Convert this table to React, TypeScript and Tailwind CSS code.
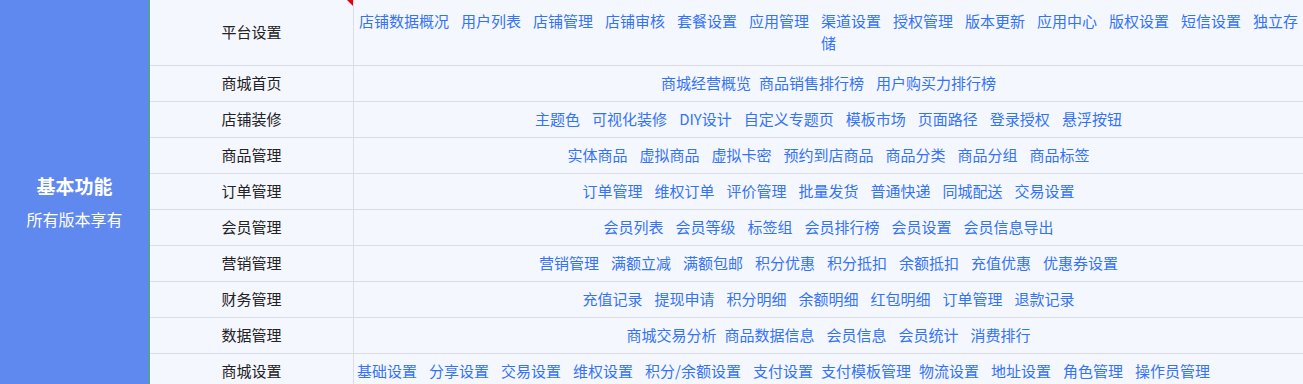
const rows: { name: string; items: string[]; tight?: string[]; left?: boolean }[] = [
  {
    name: '平台设置',
    items: ['店铺数据概况', '用户列表', '店铺管理', '店铺审核', '套餐设置', '应用管理', '渠道设置', '授权管理', '版本更新', '应用中心', '版权设置', '短信设置', '独立存储'],
  },
  { name: '商城首页', items: ['商城经营概览', '商品销售排行榜', '用户购买力排行榜'], tight: ['商品销售排行榜'] },
  { name: '店铺装修', items: ['主题色', '可视化装修', 'DIY设计', '自定义专题页', '模板市场', '页面路径', '登录授权', '悬浮按钮'] },
  { name: '商品管理', items: ['实体商品', '虚拟商品', '虚拟卡密', '预约到店商品', '商品分类', '商品分组', '商品标签'] },
  { name: '订单管理', items: ['订单管理', '维权订单', '评价管理', '批量发货', '普通快递', '同城配送', '交易设置'] },
  { name: '会员管理', items: ['会员列表', '会员等级', '标签组', '会员排行榜', '会员设置', '会员信息导出'] },
  { name: '营销管理', items: ['营销管理', '满额立减', '满额包邮', '积分优惠', '积分抵扣', '余额抵扣', '充值优惠', '优惠券设置'] },
  { name: '财务管理', items: ['充值记录', '提现申请', '积分明细', '余额明细', '红包明细', '订单管理', '退款记录'] },
  { name: '数据管理', items: ['商城交易分析', '商品数据信息', '会员信息', '会员统计', '消费排行'], tight: ['商品数据信息'] },
  {
    name: '商城设置',
    items: ['基础设置', '分享设置', '交易设置', '维权设置', '积分/余额设置', '支付设置', '支付模板管理', '物流设置', '地址设置', '角色管理', '操作员管理'],
    tight: ['支付模板管理', '物流设置'],
    left: true,
  },
];

export default function App() {
  return (
    <div className="flex w-[1303px] min-h-[384px] bg-[#f5f7ff] font-['Noto_Sans_CJK_SC',sans-serif]">
      {/* version column */}
      <div className="w-[150px] shrink-0 bg-[#6089f0] border-r border-[#4caf50] flex flex-col items-center pt-[174px] text-white">
        <div className="text-[19px] leading-[24px] font-bold">基本功能</div>
        <div className="mt-[10px] text-[16px] leading-[22px]">所有版本享有</div>
      </div>

      {/* feature rows */}
      <div className="flex-1">
        {rows.map((row, i) => (
          <div
            key={row.name}
            className={`flex border-b border-[#dadde5] ${i === 0 ? 'h-[66px]' : 'h-[36px]'}`}
          >
            <div className="relative w-[204px] shrink-0 border-r border-[#dadde5] flex items-center justify-center pb-px text-[15px] text-[#222]">
              {row.name}
              {i === 0 && (
                <span className="absolute top-0 right-0 w-0 h-0 border-t-[6px] border-l-[6px] border-t-[#e60012] border-l-transparent" />
              )}
            </div>
            <div
              className={`flex-1 flex items-center px-[3px] pb-px text-[15px] leading-[22px] text-[#3473f6] ${
                row.left ? 'justify-start' : 'justify-center'
              }`}
            >
              <p className={row.left ? 'text-left' : 'text-center'}>
                {row.items.map((item, j) => (
                  <span
                    key={item}
                    className={j === 0 ? '' : row.tight?.includes(item) ? 'ml-2' : 'ml-3'}
                  >
                    {item}
                  </span>
                ))}
              </p>
            </div>
          </div>
        ))}
      </div>
    </div>
  );
}
